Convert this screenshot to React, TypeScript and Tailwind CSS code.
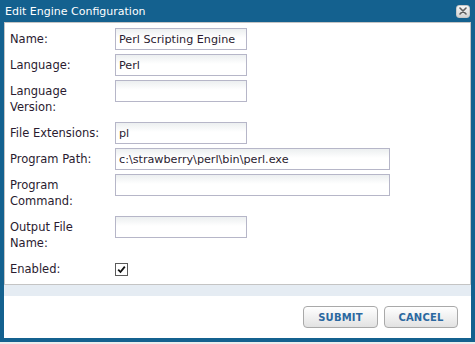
import React from 'react';

type Field = {
  label: string[];
  value?: string;
  wide?: boolean;
  checkbox?: boolean;
};

const fields: Field[] = [
  { label: ['Name:'], value: 'Perl Scripting Engine' },
  { label: ['Language:'], value: 'Perl' },
  { label: ['Language', 'Version:'], value: '' },
  { label: ['File Extensions:'], value: 'pl' },
  { label: ['Program Path:'], value: 'c:\\strawberry\\perl\\bin\\perl.exe', wide: true },
  { label: ['Program', 'Command:'], value: '', wide: true },
  { label: ['Output File', 'Name:'], value: '' },
  { label: ['Enabled:'], checkbox: true },
];

const App: React.FC = () => {
  return (
    <div className="w-[475px] h-[344px] bg-[#ececec] font-['DejaVu_Sans',Verdana,sans-serif]">
      <div className="w-[475px] h-[342px] bg-[#14618f] flex flex-col px-[4px] pb-[4px]">
        {/* title bar */}
        <div className="h-[22px] flex items-center justify-between pl-[1px] pr-[1px]">
          <span className="text-white text-[11px] leading-none pt-[1px]">Edit Engine Configuration</span>
          <button className="w-[14px] h-[13px] rounded-[3px] bg-linear-to-b from-[#f6f6f6] to-[#d4d4d4] border border-[#c8c8c8] flex items-center justify-center">
            <svg width="8" height="8" viewBox="0 0 8 8">
              <path d="M1 1 L7 7 M7 1 L1 7" stroke="#5e5e5e" strokeWidth="1.6" strokeLinecap="round" />
            </svg>
          </button>
        </div>

        {/* form panel */}
        <div className="bg-white border border-[#c4c4c4] pt-[5px] pb-[4px] pl-[5px] flex flex-col gap-[4px]">
          {fields.map((f) => (
            <div key={f.label.join(' ')} className="flex items-start">
              <div className="w-[105px] py-[3px] text-[11.5px] leading-4 text-[#2a1b30]">
                {f.label.map((l) => (
                  <div key={l}>{l}</div>
                ))}
              </div>
              {f.checkbox ? (
                <div className="h-[22px] flex items-center">
                  <div className="w-[13px] h-[13px] border border-[#5a5a5a] bg-white flex items-center justify-center">
                    <svg width="9" height="9" viewBox="0 0 9 9">
                      <path d="M1.2 4.6 L3.5 7 L7.8 1.6" stroke="#111" strokeWidth="1.8" fill="none" />
                    </svg>
                  </div>
                </div>
              ) : (
                <input
                  type="text"
                  defaultValue={f.value}
                  className={`h-[22px] ${f.wide ? 'w-[275px]' : 'w-[132px]'} border border-[#b6b6c8] bg-linear-to-b from-[#eceff0] to-white to-[45%] pl-[3px] text-[11.2px] text-[#2a1b30] outline-none font-['DejaVu_Sans',Verdana,sans-serif]`}
                />
              )}
            </div>
          ))}
        </div>

        {/* separator band */}
        <div className="h-[11px] bg-[#e5ecf3]" />

        {/* buttons */}
        <div className="flex-1 bg-white flex justify-end items-start pt-[10px] pr-[13px] gap-[6px]">
          <button className="w-[75px] h-[22px] rounded-[4px] border border-[#a9a9a9] bg-linear-to-b from-white to-[#e2e2e2] text-[10px] font-bold tracking-[0.2px] text-[#2b68a0]">
            SUBMIT
          </button>
          <button className="w-[74px] h-[22px] rounded-[4px] border border-[#a9a9a9] bg-linear-to-b from-white to-[#e2e2e2] text-[10px] font-bold tracking-[0.2px] text-[#2b68a0]">
            CANCEL
          </button>
        </div>
      </div>
    </div>
  );
};

export default App;
